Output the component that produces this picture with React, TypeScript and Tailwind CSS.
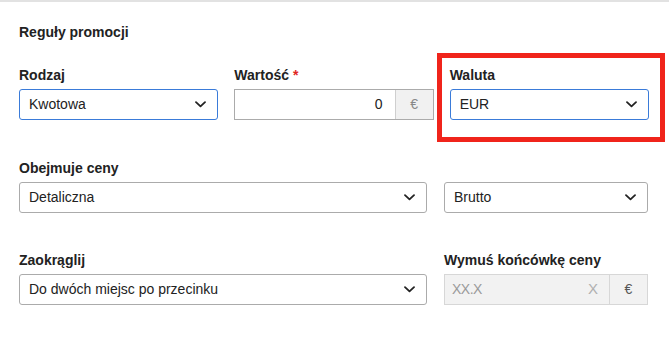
import React from "react";

const Chevron = () => (
  <svg width="11" height="7" viewBox="0 0 11 7" fill="none" className="shrink-0">
    <path d="M1 1.2L5.5 5.4L10 1.2" stroke="#222" strokeWidth="1.8" strokeLinecap="round" strokeLinejoin="round" />
  </svg>
);

const Label = ({ children }: { children: React.ReactNode }) => (
  <div className="h-[20px] mb-[4px] text-[14px] leading-[20px] font-bold text-[#222]">{children}</div>
);

const Select = ({ value, focused }: { value: string; focused?: boolean }) => (
  <div
    className={`h-[31px] flex items-center justify-between pl-[9px] pr-[11px] rounded-[3px] bg-white border ${
      focused ? "border-[#3a7bd9]" : "border-[#ababab]"
    } text-[14px] text-[#222]`}
  >
    <span>{value}</span>
    <Chevron />
  </div>
);

export default function App() {
  return (
    <div
      className="relative w-[669px] h-[338px] bg-white overflow-hidden"
      style={{ fontFamily: '"Liberation Sans", Arial, sans-serif' }}
    >
      <div className="h-[2px] bg-[#e2e2e2]" />
      <div className="pl-[19px] w-[649px]">
        <div className="mt-[22px] h-[16px] text-[14px] leading-[16px] font-bold text-[#222]">Reguły promocji</div>

        <div className="mt-[25px] grid grid-cols-3 gap-x-[16px]">
          <div>
            <Label>Rodzaj</Label>
            <Select value="Kwotowa" focused />
          </div>
          <div>
            <Label>
              Wartość <span className="text-[#e0261f]">*</span>
            </Label>
            <div className="h-[31px] flex border border-[#ababab] bg-white text-[14px]">
              <div className="flex-1 flex items-center justify-end pr-[12px] text-[#222]">0</div>
              <div className="w-[38px] flex items-center justify-center bg-[#f1f1f1] border-l border-[#cfcfcf] text-[#888]">
                €
              </div>
            </div>
          </div>
          <div>
            <Label>Waluta</Label>
            <Select value="EUR" focused />
          </div>
        </div>

        <div className="mt-[38px] grid grid-cols-[408px_204px] gap-x-[17px]">
          <div>
            <Label>Obejmuje ceny</Label>
            <Select value="Detaliczna" />
          </div>
          <div>
            <Label>&nbsp;</Label>
            <Select value="Brutto" />
          </div>
        </div>

        <div className="mt-[37px] grid grid-cols-[408px_204px] gap-x-[17px]">
          <div>
            <Label>Zaokrąglij</Label>
            <Select value="Do dwóch miejsc po przecinku" />
          </div>
          <div>
            <Label>Wymuś końcówkę ceny</Label>
            <div className="h-[31px] flex border border-[#d7d7d7] bg-[#f2f2f2] text-[14px]">
              <div className="flex-1 flex items-center justify-between pl-[7px] pr-[11px]">
                <span className="text-[#9a9a9a] tracking-[-0.5px]">XX.X</span>
                <span className="text-[#b0b0b0] text-[15px]">X</span>
              </div>
              <div className="w-[38px] flex items-center justify-center border-l border-[#d7d7d7] text-[#555]">
                €
              </div>
            </div>
          </div>
        </div>
      </div>

      <div className="absolute left-[437px] top-[53px] w-[228px] h-[89px] border-[5px] border-[#f0241b]" />
    </div>
  );
}
